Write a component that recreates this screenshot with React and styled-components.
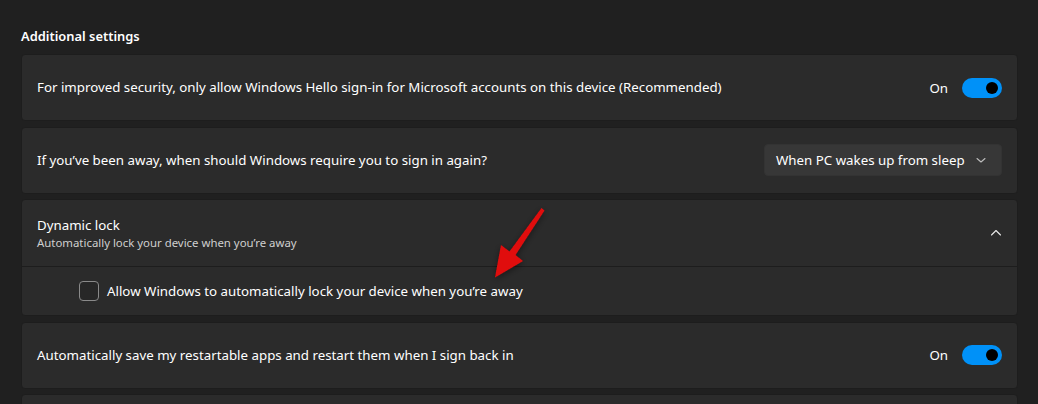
import React from 'react';
import styled, { createGlobalStyle } from 'styled-components';

const GlobalStyle = createGlobalStyle`
  html, body {
    margin: 0;
    padding: 0;
    background: #202020;
  }
  body {
    font-family: "Noto Sans", "Open Sans", sans-serif;
    color: #ffffff;
    -webkit-font-smoothing: antialiased;
  }
`;

const Page = styled.div`
  position: relative;
  width: 1038px;
  height: 404px;
  overflow: hidden;
  box-sizing: border-box;
  padding: 27px 20px 0 21px;
`;

const Heading = styled.h2`
  margin: 0 0 9px 0;
  font-size: 12.9px;
  font-weight: 600;
  line-height: 18px;
  color: #ffffff;
`;

const List = styled.div`
  display: flex;
  flex-direction: column;
  gap: 5.5px;
`;

const Card = styled.div`
  background: #2b2b2b;
  border: 1px solid #1d1d1d;
  border-radius: 4px;
  overflow: hidden;
`;

const Row = styled.div`
  display: flex;
  align-items: center;
  justify-content: space-between;
  height: ${p => p.$height || 65}px;
  box-sizing: border-box;
  padding: 0 15px 0 ${p => p.$indent || 15}px;
  border-top: ${p => (p.$divider ? '1px solid #1d1d1d' : 'none')};
`;

const Label = styled.div`
  font-size: 13.3px;
  line-height: 19px;
  color: #ffffff;
`;

const TitleBlock = styled.div`
  display: flex;
  flex-direction: column;
`;

const Subtitle = styled.div`
  font-size: 11.4px;
  line-height: 16px;
  color: #cfcfcf;
`;

const Control = styled.div`
  display: flex;
  align-items: center;
  gap: 14px;
`;

const StateText = styled.span`
  font-size: 13.3px;
  color: #ffffff;
`;

const Toggle = styled.div`
  width: 40px;
  height: 20px;
  border-radius: 10px;
  background: #0091f8;
  display: flex;
  align-items: center;
  justify-content: flex-end;
  padding-right: 4px;
  box-sizing: border-box;
`;

const Knob = styled.div`
  width: 12px;
  height: 12px;
  border-radius: 50%;
  background: #000000;
`;

const Select = styled.div`
  width: 238px;
  height: 32px;
  box-sizing: border-box;
  border-radius: 4px;
  background: #373737;
  border: 1px solid #333333;
  display: flex;
  align-items: center;
  justify-content: space-between;
  padding: 0 14px 0 11px;
  font-size: 13.3px;
  color: #ffffff;
`;

const Check = styled.div`
  width: 20px;
  height: 20px;
  box-sizing: border-box;
  border: 1px solid #8a8a8a;
  border-radius: 4px;
  background: #272727;
`;

const CheckRow = styled.div`
  display: flex;
  align-items: center;
  gap: 8px;
`;

const Overlay = styled.svg`
  position: absolute;
  left: 0;
  top: 0;
  pointer-events: none;
`;

const Chevron = ({ up }) => (
  <svg width="12" height="12" viewBox="0 0 12 12" fill="none">
    <path
      d={up ? 'M1.5 8 L6 3.5 L10.5 8' : 'M2 4.5 L6 8 L10 4.5'}
      stroke={up ? '#e8e8e8' : '#bdbdbd'}
      strokeWidth="1.1"
      strokeLinecap="round"
      strokeLinejoin="round"
    />
  </svg>
);

const SwitchControl = () => (
  <Control>
    <StateText>On</StateText>
    <Toggle>
      <Knob />
    </Toggle>
  </Control>
);

export default function App() {
  return (
    <>
      <GlobalStyle />
      <Page>
        <Heading>Additional settings</Heading>
        <List>
          <Card>
            <Row>
              <Label>
                For improved security, only allow Windows Hello sign-in for Microsoft accounts on this device (Recommended)
              </Label>
              <SwitchControl />
            </Row>
          </Card>
          <Card>
            <Row>
              <Label>If you’ve been away, when should Windows require you to sign in again?</Label>
              <Select>
                <span>When PC wakes up from sleep</span>
                <Chevron />
              </Select>
            </Row>
          </Card>
          <Card>
            <Row $height={66}>
              <TitleBlock>
                <Label>Dynamic lock</Label>
                <Subtitle>Automatically lock your device when you’re away</Subtitle>
              </TitleBlock>
              <Chevron up />
            </Row>
            <Row $height={49} $divider $indent={57}>
              <CheckRow>
                <Check />
                <Label>Allow Windows to automatically lock your device when you’re away</Label>
              </CheckRow>
            </Row>
          </Card>
          <Card>
            <Row>
              <Label>Automatically save my restartable apps and restart them when I sign back in</Label>
              <SwitchControl />
            </Row>
          </Card>
          <Card>
            <Row />
          </Card>
        </List>
        <Overlay width="1038" height="404" viewBox="0 0 1038 404">
          <defs>
            <filter id="shadow" x="-50%" y="-50%" width="200%" height="200%">
              <feDropShadow dx="0" dy="2" stdDeviation="3" floodColor="#000" floodOpacity="0.45" />
            </filter>
          </defs>
          <polygon
            points="541.5,208 544.5,210.5 515.5,255 523,261 495,277.5 501,245 509.5,251.5"
            fill="#e00b0b"
            filter="url(#shadow)"
          />
        </Overlay>
      </Page>
    </>
  );
}
